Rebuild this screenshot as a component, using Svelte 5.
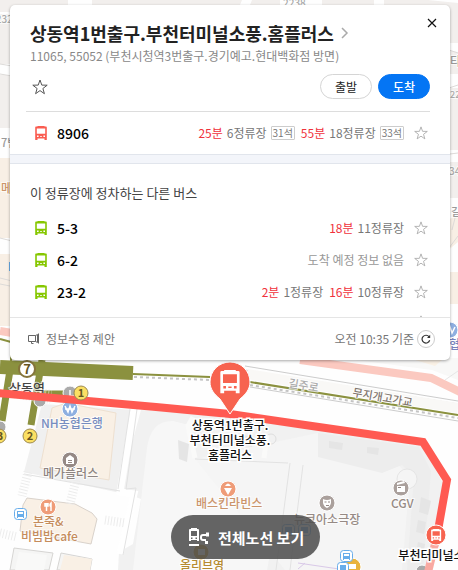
<script lang="ts">
	type Arrival = { min: string; stops: string; seats?: string };
	type Bus = { no: string; arrivals: Arrival[] };

	const express: Bus = {
		no: '8906',
		arrivals: [
			{ min: '25분', stops: '6정류장', seats: '31석' },
			{ min: '55분', stops: '18정류장', seats: '33석' }
		]
	};

	const others: Bus[] = [
		{ no: '5-3', arrivals: [{ min: '18분', stops: '11정류장' }] },
		{ no: '6-2', arrivals: [] },
		{
			no: '23-2',
			arrivals: [
				{ min: '2분', stops: '1정류장' },
				{ min: '16분', stops: '10정류장' }
			]
		}
	];

	const busPath =
		'M2.500 0h7v.6H11q.8 0 .8.8V14H9.500v-1.500h-7V14H.2V1.400Q.2.6 1 .6h1.500zM1.800 2.600v5.200h8.400V2.600zM2 9.600v1.500h1.600V9.600zM8.400 9.600v1.500H10V9.600zM5 10v.8h2V10z';
	const starPath = 'M8 1l1.800 5.100 5.400.1-4.300 3.300 1.500 5.200L8 11.600l-4.400 3.100 1.500-5.200L.8 6.200l5.400-.1z';
</script>

{#snippet star()}
	<svg class="star" viewBox="0 0 16 16" aria-hidden="true"><path d={starPath} /></svg>
{/snippet}

{#snippet busRow(bus: Bus, color: string)}
	<div class="row">
		<svg class="bus {color}" viewBox="0 0 12 14" aria-hidden="true">
			<path fill-rule="evenodd" d={busPath} />
		</svg>
		<a class="bus-no" href="#{bus.no}">{bus.no}</a>
		<div class="arrivals">
			{#each bus.arrivals as { min, stops, seats }}
				<span class="arrival">
					<em>{min}</em>
					<span>{stops}</span>
					{#if seats}<span class="seats">{seats}</span>{/if}
				</span>
			{:else}
				<span class="none">도착 예정 정보 없음</span>
			{/each}
		</div>
		<button class="fav" aria-label="{bus.no} 즐겨찾기">{@render star()}</button>
	</div>
{/snippet}

<main class="page">
	<svg class="map" viewBox="0 0 458 570" preserveAspectRatio="xMinYMin slice" role="img" aria-label="지도">
		<rect width="458" height="570" fill="#fefefe" />

		<!-- blocks around the card -->
		<path fill="#f2efed" d="M0 0h68v12H0zM92 0h150l-4 10H92zM252 0h28v10h-32zM322 0h52v10h-52zM384 0h44l30 3v40h-12V8h-62zM446 50l12 2v22h-12zM446 88h12v62h-12zM446 162h12v36h-12zM0 14h12v50H0zM0 75h12v53H0z" />
		<path fill="#f8efe5" d="M0 158h12v80H0zM0 254h12v72H0zM446 220l12-4v26l-12 10zM446 272h12v32h-12z" />
		<path fill="none" stroke="#dddad8" d="M0 64l12 2M0 74l12 2M449 50l9 3M449 88l9-3M0 238l12 3M0 278l12 3M0 284l10 2M450 154l8-1M449 248l9-12M452 230l3-12" />
		<path fill="#f8f8f7" d="M340 358h118v22l-26-10z" />
		<path fill="#faf1e5" d="M415 360h27l-7 6z" />
		<path fill="none" stroke="#e5e5e5" d="M445 380l13-9" />

		<!-- lower blocks -->
		<path fill="#f0f0f0" d="M42 404l92 6-14 83-55-12-41-9z" />
		<path fill="#f9f0e5" stroke="#eee0d0" d="M52 408l14-5 50 10-7 67-69-12z" />
		<path fill="#f9f0e5" stroke="#d9d2cb" d="M27 498l48 6 17 9 5 6-6 25-71-13 3-26z" />
		<path fill="#f5f5f4" stroke="#d6d5d3" d="M14 548l39 5-4 17H10zM61 553l31 6-2 11H57z" />
		<path fill="#f9f0e5" d="M64 555l28 4-2 11H60z" />
		<path fill="#f9f9f8" d="M19 552l28 3-3 15H15z" />
		<path fill="#f1f1f1" d="M141 410l90 5 190 28 22 40-10 87H118l1-18 14-8 8-45-22-8z" />
		<path fill="#f7f7f7" d="M147 448q4-28 26-27l20 5 2 33 93 4-21 107H133z" />
		<path fill="#f5f5f5" d="M195 459l123-26 2 20 54 14 24-2 12 11-8 94H285z" />
		<path fill="#ededed" d="M318 433l101 14 12 24-8 99h-16l7-94-12-11-20 8-64-16z" />
		<path fill="#e5e5e5" d="M329 441l14 2-1 7-13-2zM367 447l12 1-1 7-11-2zM421 497l10 4-3 14-9-3zM418 520l8 2-2 12-8-2zM418 542l7 2-2 9-7-1zM241 435l12 1-1 11-13-2zM178 440l11 4-2 18-8-3z" />
		<path fill="none" stroke="#fff" stroke-width="7" d="M134 409l-14 83 14 2-14 60" />
		<path fill="none" stroke="#e2e2e2" d="M137 409l-11 80 10-1-13 67M130 409l-12 80M290 463l-14 107M303 465l-13 105M195 459l93 4M24 474l96 17" />
		<path fill="none" stroke="#ececec" stroke-width="9" stroke-dasharray="1 2" d="M28 472l-6 24M76 480l-6 24M105 520l20 3M0 533l17 4" />
		<circle cx="407" cy="479" r="10" fill="#f5f5f5" stroke="#e5e5e5" />
		<circle cx="271" cy="439" r="5" fill="none" stroke="#dedede" />
		<path fill="none" stroke="#fafaf9" stroke-width="5" d="M193 417l-5 9 7 32M267 435l-3 23" />
		<path fill="none" stroke="#d9c9e8" d="M298 563l41 6M298 569l7-6" />

		<!-- roads and rail -->
		<path fill="none" stroke="#fbc9c0" stroke-width="8" d="M0 331l12 2M300 360l131 18 29 14" />
		<path fill="none" stroke="#ccc" stroke-width="1" d="M245 366l213 35M245 370l213 34M250 387l208 34" />
		<path fill="none" stroke="#f9f8f6" stroke-width="10" d="M247 374l211 34" />
		<path fill="none" stroke="#8b913f" stroke-width="14" d="M0 367l133 6" />
		<path fill="none" stroke="#8b913f" stroke-width="7" d="M10 370L2 421M42 360l-11 65M41 394h36" />
		<path fill="none" stroke="#8b913f" stroke-width="2" d="M0 339l11 3M11 344v18M133 374l77 3M250 382l208 33" />
		<path fill="none" stroke="#c4c4c4" stroke-width="2" stroke-dasharray="3 3" d="M134 377l76 3M250 385l208 33" />
		<path fill="none" stroke="#e5e4df" stroke-width="14" stroke-dasharray="1 2" d="M12 391l39 6" opacity=".6" />

		<!-- street and shop names -->
		<g class="names">
			<text x="283" y="7" font-size="10" fill="#aaa">2238</text>
			<text x="-10" y="23" font-size="10" fill="#aaa">2232</text>
			<text x="450" y="66" font-size="12" fill="#999">타워</text>
			<text x="450" y="98" font-size="9" fill="#aaa">2243</text>
			<text x="449" y="175" font-size="10" fill="#aaa">345</text>
			<text x="451" y="216" font-size="11" fill="#999">길주</text>
			<text x="1" y="147" font-size="11" fill="#999">7번</text>
			<text x="1" y="193" font-size="12" fill="#cc9569">메가</text>
			<text x="449" y="349" font-size="12" fill="#7783bd">협</text>
			<text x="9" y="393" font-size="13" fill="#444">상동역</text>
			<text x="41" y="428" font-size="12" fill="#778dc0">NH농협은행</text>
			<text x="43" y="478" font-size="12" fill="#8e8581">메가플러스</text>
			<text x="33" y="526" font-size="12" fill="#c58c5c">본죽&amp;</text>
			<text x="21" y="541" font-size="12" fill="#c58c5c">비빔밥cafe</text>
			<text x="196" y="508" font-size="12" fill="#cb946a">배스킨라빈스</text>
			<text x="180" y="570" font-size="12" fill="#b68b31">올리브영</text>
			<text x="294" y="524" font-size="12" fill="#968a85">뉴코아소극장</text>
			<text x="391" y="508" font-size="12" fill="#968a85">CGV</text>
			<text x="288" y="387" font-size="11" fill="#aaa" transform="rotate(9 288 387)">길주로</text>
			<text x="352" y="396" font-size="11" fill="#82776f" transform="rotate(10 352 396)">무지개고가교</text>
		</g>

		<!-- place markers -->
		<g stroke="#fff">
			<circle cx="450" cy="330" r="8" fill="#8eafe0" />
			<circle cx="70" cy="409" r="8" fill="#8eafe0" />
			<circle cx="70" cy="460" r="8" fill="#958985" />
			<circle cx="48" cy="507" r="8" fill="#ef9c78" />
			<circle cx="228" cy="489" r="8" fill="#ef9c78" />
			<circle cx="201" cy="552" r="8" fill="#d79b20" />
			<circle cx="327" cy="503" r="8" fill="#aaa09c" />
			<circle cx="401" cy="488" r="8" fill="#aaa09c" />
			<circle cx="352" cy="567" r="9" fill="#e9b43e" />
			<circle cx="70" cy="393" r="7" fill="#aaa" />
			<circle cx="40" cy="401" r="6" fill="#aaa" />
			<circle cx="0" cy="427" r="6" fill="#aaa" />
			<circle cx="422" cy="571" r="6" fill="#aaa" />
		</g>
		<g fill="none" stroke="#fff" stroke-width="1.500">
			<path d="M65 406l3 6 2-6 2 6 3-6M65 409h10M446 327l2 6 2-6 2 6 3-6" />
			<path d="M45 503v3h3v-3M46.500 503v8M51 511v-8q-2 2 0 4M70 390v6h4" />
		</g>
		<path fill="#fff" d="M66 458l4-3 4 3v6h-8zM224 488h8l-4 7zM225 486q3-5 6 0zM198 549h7v6h-7zM323 499q4 2 8 0v4q-1 4-4 5-3-1-4-5zM397 486h8v6h-8zM397 483l7-2 1 2-8 2zM348 564h8v5h-8z" />
		<path fill="#958985" d="M68 460h4v1h-4zM68 462h4v1h-4zM324.500 501.500h2v1h-2zM328 501.500h2v1h-2zM326 505h3v1h-3zM398 487h3v1h-3z" />
		<g fill="#fff" stroke="#68adea">
			<rect x="14.500" y="508.500" width="12" height="11" rx="3" />
			<rect x="340.500" y="550.500" width="12" height="11" rx="3" />
			<rect x="337.500" y="562.500" width="11" height="11" rx="3" />
			<rect x="282.500" y="524.500" width="12" height="11" rx="3" />
			<rect x="298.500" y="524.500" width="12" height="11" rx="3" />
		</g>
		<path fill="#68adea" fill-rule="evenodd" d="M17 511h7v7h-1v-1h-5v1h-1zm1 1v2h5v-2zM343 553h7v7h-1v-1h-5v1h-1zm1 1v2h5v-2zM340 565h6v5h-6zM285 527h7v6h-7zM301 527h7v6h-7z" />
		<path fill="#68adea" d="M9 262h2v9H9z" />

		<!-- bus route -->
		<path fill="none" stroke="#f9a9a1" stroke-width="8" d="M436 540l-8 32" />
		<path fill="none" stroke="#ff5a52" stroke-width="8" d="M-4 393l160 14 74 7 75 11 118 17 24 38-10 56" />

		<!-- subway line and exits -->
		<circle cx="27" cy="369" r="8" fill="#fff" stroke="#85743b" stroke-width="2" />
		<g fill="#fbdf63" stroke="#9c8950">
			<circle cx="81" cy="393" r="7" />
			<circle cx="30" cy="436" r="7" />
			<circle cx="-1" cy="436" r="7" />
		</g>
		<g class="exits">
			<text x="27" y="374" font-size="13">7</text>
			<text x="81" y="397" font-size="11">1</text>
			<text x="30" y="440" font-size="11">2</text>
			<text x="0" y="440" font-size="11">3</text>
		</g>

		<!-- stops -->
		<path fill="#f7634f" stroke="#fff" d="M230 414l-10-15c-6-5-10-10-10-17a20 20 0 0 1 40 0c0 7-4 12-10 17z" />
		<path fill="#fff" fill-rule="evenodd" d={busPath} transform="translate(220 370) scale(1.660)" />
		<circle cx="436" cy="535" r="10" fill="#f7634f" stroke="#fff" />
		<path fill="#fff" fill-rule="evenodd" d={busPath} transform="translate(431 529) scale(.86)" />
		<g class="stops">
			<text x="230" y="430">상동역1번출구.</text>
			<text x="230" y="445">부천터미널소풍.</text>
			<text x="230" y="460">홈플러스</text>
			<text x="437" y="560">부천터미널소풍</text>
		</g>
	</svg>

	<section class="card">
		<header>
			<div class="title-line">
				<h1>
					<a href="#stop">상동역1번출구.부천터미널소풍.홈플러스</a>
				</h1>
				<svg class="chevron" viewBox="0 0 8 12" aria-hidden="true"><path d="M1 1l5 5-5 5" /></svg>
				<button class="close" aria-label="닫기">
					<svg viewBox="0 0 10 10" aria-hidden="true"><path d="M1 1l8 8M9 1L1 9" /></svg>
				</button>
			</div>
			<p class="sub">11065, 55052 (부천시청역3번출구.경기예고.현대백화점 방면)</p>
			<div class="actions">
				<button class="fav main" aria-label="정류장 즐겨찾기">{@render star()}</button>
				<button class="pill">출발</button>
				<button class="pill blue">도착</button>
			</div>
		</header>

		<div class="express">{@render busRow(express, 'red')}</div>

		<div class="others">
			<h2>이 정류장에 정차하는 다른 버스</h2>
			<div class="list">
				{#each others as bus}
					{@render busRow(bus, 'green')}
				{/each}
				<div class="row last">
					<button class="fav" aria-label="즐겨찾기">{@render star()}</button>
				</div>
			</div>
		</div>

		<footer>
			<button class="suggest">
				<svg viewBox="0 0 12 12" aria-hidden="true">
					<path d="M.5 2.500h7v6h-7zM7.500 2.500l2-1v8l-2-1M10.500.5v10M3.500 8.500v2h2" />
				</svg>
				정보수정 제안
			</button>
			<span class="time">오전 10:35 기준</span>
			<button class="refresh" aria-label="새로고침">
				<svg viewBox="0 0 10 10" aria-hidden="true">
					<path d="M8.700 6.300a3.900 3.900 0 1 1-.6-3.500" />
					<path class="tip" d="M9.200.8v3.200H6z" />
				</svg>
			</button>
		</footer>
	</section>

	<button class="all-routes">
		<svg viewBox="0 0 22 18" aria-hidden="true">
			<path fill="#fff" fill-rule="evenodd" d="M3 0h6v1h1q1 0 1 1v11H9v-1H3v1H1V2q0-1 1-1h1zM3 3v5h6V3zM3 9.500V11h1.500V9.500zM7.500 9.500V11H9V9.500z" />
			<path fill="none" stroke="#fff" stroke-width="2" d="M1 17h10M20 7h-5q-2 0-2 2v1q0 2 2 2h3" />
			<path fill="#fff" d="M18 4.500h3v4h-3zM17 13h3v3h-3z" />
		</svg>
		전체노선 보기
	</button>
</main>

<style>
	:global(body) {
		margin: 0;
	}

	.page {
		position: relative;
		box-sizing: border-box;
		min-height: 100vh;
		padding: 5px 8px 0 10px;
		overflow: hidden;
		font-family: 'Noto Sans CJK KR', 'Noto Sans', sans-serif;
		color: #222;
	}

	.map {
		position: absolute;
		top: 0;
		left: 0;
		width: 100%;
		height: 100%;
	}

	.names text {
		font-weight: 500;
		stroke: #fff;
		stroke-width: 2px;
		stroke-opacity: 0.7;
		paint-order: stroke;
	}

	.exits text {
		font-weight: 700;
		fill: #65541f;
		text-anchor: middle;
	}

	.stops text {
		font-size: 12px;
		font-weight: 500;
		fill: #111;
		text-anchor: middle;
		stroke: #fff;
		stroke-width: 3px;
		paint-order: stroke;
	}

	button {
		padding: 0;
		border: 0;
		background: none;
		font: inherit;
		color: inherit;
		cursor: pointer;
	}

	a {
		color: inherit;
		text-decoration: none;
	}

	svg {
		display: block;
	}

	.card {
		position: relative;
		background: #fff;
		border-radius: 5px;
		box-shadow: 0 1px 3px rgba(0, 0, 0, 0.35);
	}

	header {
		margin: 0 20px 0 16px;
		padding: 16px 0 12px 4px;
	}

	.title-line {
		display: flex;
		align-items: center;
		height: 24px;
	}

	h1 {
		margin: 0;
		font-size: 18px;
		font-weight: 700;
		line-height: 24px;
		white-space: nowrap;
	}

	.chevron {
		width: 8px;
		height: 12px;
		margin-left: 7px;
		fill: none;
		stroke: #aaa;
		stroke-width: 1.5px;
	}

	/* pulled into the corner of the card */
	.close {
		margin: -20px -7px 0 auto;
	}

	.close svg {
		width: 10px;
		height: 10px;
		stroke: #111;
		stroke-width: 1.2px;
	}

	.sub {
		margin: 2px 0 0;
		font-size: 12px;
		line-height: 18px;
		color: #888;
		white-space: nowrap;
	}

	.actions {
		display: flex;
		align-items: center;
		gap: 6px;
		margin-top: 9px;
	}

	.fav .star {
		width: 14px;
		height: 14px;
		fill: none;
		stroke: #aaa;
		stroke-width: 1px;
	}

	.fav.main {
		margin-right: auto;
		padding-left: 2px;
	}

	.fav.main .star {
		width: 16px;
		height: 16px;
		stroke: #555;
	}

	.pill {
		box-sizing: border-box;
		width: 52px;
		height: 25px;
		border: 1px solid #d5d5d5;
		border-radius: 13px;
		font-size: 12px;
		font-weight: 400;
		line-height: 23px;
	}

	.pill.blue {
		border-color: #0475f4;
		background: #0475f4;
		font-weight: 500;
		color: #fff;
	}

	.express {
		padding-bottom: 1px;
		border-bottom: 1px solid #e1e5ec;
	}

	.express .row {
		height: 41px;
		margin-left: 16px;
		padding-left: 9px;
		border-top: 1px solid #ddd;
	}

	.row {
		display: flex;
		align-items: center;
		height: 32px;
		margin: 0 20px 0 25px;
	}

	.bus {
		width: 12px;
		height: 14px;
	}

	.bus.red {
		fill: #fa5c50;
	}

	.bus.green {
		fill: #86c700;
	}

	.bus-no {
		margin-left: 10px;
		font-size: 14px;
		font-weight: 500;
		line-height: 20px;
		color: #000;
	}

	.arrivals {
		display: flex;
		gap: 6px;
		margin-left: auto;
		font-size: 12px;
		line-height: 18px;
		color: #777;
	}

	.arrival {
		display: flex;
		align-items: center;
		gap: 4px;
	}

	.arrival em {
		font-style: normal;
		color: #f0323c;
	}

	.seats {
		padding: 0 1px;
		border: 1px solid #ccc;
		border-radius: 1px;
		font-size: 10px;
		line-height: 12px;
	}

	.none {
		color: #999;
	}

	.row .fav {
		margin: 0 2px 0 10px;
	}

	.others {
		border-top: 8px solid #f3f5fa;
	}

	h2 {
		margin: 0;
		padding: 19px 20px 9px;
		border-top: 1px solid #e1e5ec;
		font-size: 13px;
		font-weight: 400;
		line-height: 20px;
		color: #444;
	}

	.list {
		height: 105px;
		overflow: hidden;
	}

	.row.last {
		justify-content: flex-end;
		height: 28px;
	}

	footer {
		display: flex;
		align-items: center;
		height: 42px;
		padding: 0 15px 0 18px;
		border-top: 1px solid #e5e5e5;
		font-size: 12px;
		line-height: 18px;
		color: #777;
	}

	.suggest {
		display: flex;
		align-items: center;
		gap: 6px;
		margin-right: auto;
	}

	.suggest svg {
		width: 12px;
		height: 12px;
		fill: none;
		stroke: #666;
	}

	.refresh {
		display: grid;
		place-items: center;
		box-sizing: border-box;
		width: 18px;
		height: 18px;
		margin-left: 3px;
		border: 1px solid #ccc;
		border-radius: 50%;
	}

	.refresh svg {
		width: 10px;
		height: 10px;
		fill: none;
		stroke: #333;
		stroke-width: 1.2px;
	}

	.refresh .tip {
		fill: #333;
		stroke: none;
	}

	.all-routes {
		position: absolute;
		bottom: 11px;
		left: 171px;
		display: flex;
		align-items: center;
		gap: 8px;
		height: 44px;
		padding: 0 16px 0 17px;
		border-radius: 22px;
		background: rgba(80, 80, 80, 0.88);
		font-size: 15px;
		font-weight: 700;
		color: #fff;
		white-space: nowrap;
	}

	.all-routes svg {
		width: 22px;
		height: 18px;
	}
</style>
